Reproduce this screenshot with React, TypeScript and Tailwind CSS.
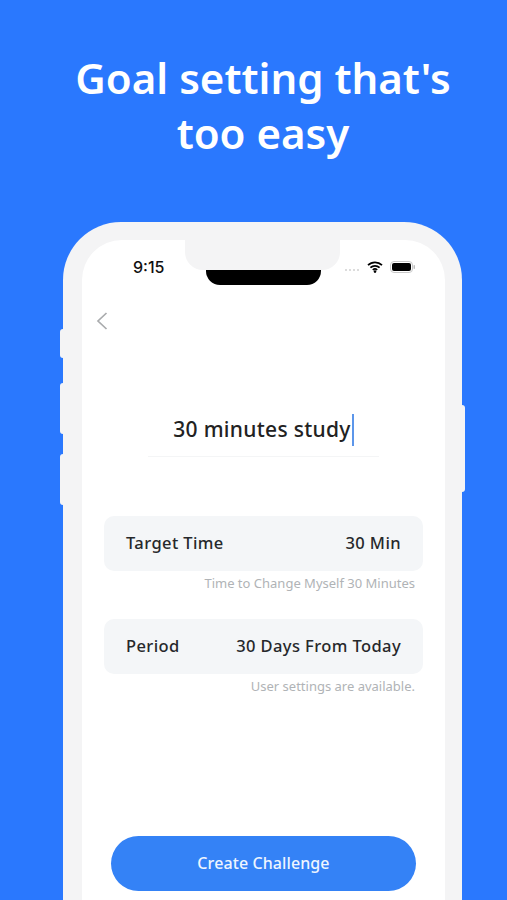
const FONT = "font-['Noto_Sans','Open_Sans',sans-serif]";

function Row({ label, value }: { label: string; value: string }) {
  return (
    <div className="flex h-[55px] items-center justify-between rounded-[10px] bg-[#f4f6f8] pl-[22px] pr-[22px] text-[16.5px] font-medium tracking-[0.4px] text-[#26282b]">
      <span>{label}</span>
      <span>{value}</span>
    </div>
  );
}

function Note({ children }: { children: string }) {
  return <p className="mr-[8px] mt-[4px] text-right text-[13px] leading-[17px] text-[#b0b3b6]">{children}</p>;
}

export default function App() {
  return (
    <div className={`${FONT} h-[900px] w-[507px] overflow-hidden bg-[#2a78fe]`}>
      <h1 className="ml-[19px] pt-[50px] text-center text-[42px] font-semibold leading-[55px] text-white">
        Goal setting that's
        <br />
        too easy
      </h1>

      <div className="relative ml-[63px] mt-[62px] h-[720px] w-[399px] rounded-t-[58px] bg-[#f4f4f5] px-[19px] pt-[18px]">
        <div className="absolute left-[-3px] top-[107px] h-[29px] w-[3px] rounded-l bg-[#f4f4f5]" />
        <div className="absolute left-[-3px] top-[161px] h-[51px] w-[3px] rounded-l bg-[#f4f4f5]" />
        <div className="absolute left-[-3px] top-[232px] h-[51px] w-[3px] rounded-l bg-[#f4f4f5]" />
        <div className="absolute right-[-3px] top-[183px] h-[87px] w-[3px] rounded-r bg-[#f4f4f5]" />

        <div className="absolute left-[122px] top-[18px] h-[30px] w-[155px] rounded-b-[18px] bg-[#f4f4f5]" />
        <div className="absolute left-[143px] top-[48px] h-[15px] w-[115px] rounded-b-[14px] bg-black" />

        <div className="h-full w-[363px] rounded-t-[40px] bg-white">
          <div className="flex h-[60px] items-start justify-between pl-[51px] pr-[30px] pt-[17px]">
            <span className={`font-['Inter',sans-serif] text-[16px] font-medium leading-[20px] text-[#111]`}>9:15</span>
            <div className="flex items-center pt-[4px]">
              <div className="mr-[8px] mt-[6px] flex gap-[2px]">
                <span className="h-[2px] w-[2px] rounded-full bg-[#d0d0d0]" />
                <span className="h-[2px] w-[2px] rounded-full bg-[#d0d0d0]" />
                <span className="h-[2px] w-[2px] rounded-full bg-[#d0d0d0]" />
                <span className="h-[2px] w-[2px] rounded-full bg-[#d0d0d0]" />
              </div>
              <svg width="16" height="12" viewBox="0 0 16 12" className="mr-[7px]">
                <path d="M1 4.2a10 10 0 0 1 14 0M3.4 6.7a6.6 6.6 0 0 1 9.2 0M5.8 9a3.2 3.2 0 0 1 4.4 0" fill="none" stroke="#000" strokeWidth="1.7" />
                <circle cx="8" cy="10.6" r="1.3" fill="#000" />
              </svg>
              <svg width="25" height="12" viewBox="0 0 25 12">
                <rect x="0.5" y="0.5" width="22" height="11" rx="3.5" fill="#fff" stroke="#c8c8c8" />
                <rect x="2" y="2" width="19" height="8" rx="2" fill="#000" />
                <rect x="23.5" y="4" width="1.5" height="4" rx="0.7" fill="#bdbdbd" />
              </svg>
            </div>
          </div>

          <svg width="14" height="20" viewBox="0 0 14 20" className="ml-[13px] mt-[11px]">
            <path d="M11.5 2 3 10l8.5 8" fill="none" stroke="#a9abad" strokeWidth="1.7" />
          </svg>

          <div className="mx-[66px] mt-[82px] flex h-[44px] items-center justify-center border-b border-[#f4f5f6] pb-[10px]">
            <span className="text-[21px] font-medium tracking-[0.3px] text-[#222]">30 minutes study</span>
            <span className="ml-[1px] h-[32px] w-[2px] bg-[#5c96ea]" />
          </div>

          <div className="mx-[22px] mt-[59px]">
            <Row label="Target Time" value="30 Min" />
            <Note>Time to Change Myself 30 Minutes</Note>
            <div className="mt-[27px]">
              <Row label="Period" value="30 Days From Today" />
            </div>
            <Note>User settings are available.</Note>
          </div>

          <button className="ml-[29px] mt-[141px] flex h-[55px] w-[305px] items-center justify-center rounded-full bg-[#3482f6] pb-[2px] text-[16px] font-medium tracking-[0.1px] text-[#eef5ff]">
            Create Challenge
          </button>
        </div>
      </div>
    </div>
  );
}
